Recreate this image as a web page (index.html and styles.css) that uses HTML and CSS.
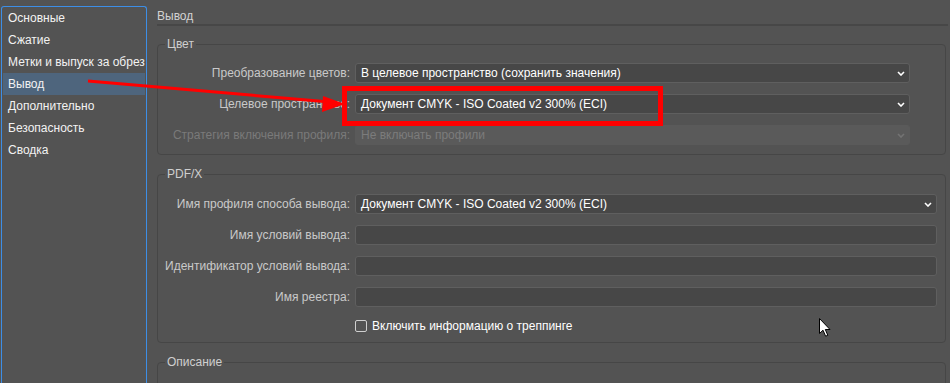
FILE: index.html
```html
<!DOCTYPE html>
<html lang="ru">
  <head>
    <meta charset="UTF-8" />
    <title>Экспорт PDF — Вывод</title>
    <link rel="stylesheet" href="styles.css">
  </head>
  <body>
    <div class="dialog">
      <ul class="nav">
        <li>Основные</li>
        <li>Сжатие</li>
        <li>Метки и выпуск за обрез</li>
        <li class="active">Вывод</li>
        <li>Дополнительно</li>
        <li>Безопасность</li>
        <li>Сводка</li>
      </ul>

      <main class="content">
        <h1 class="page-title">Вывод</h1>

        <fieldset class="group group-color">
          <legend>Цвет</legend>
          <div class="form-grid">
            <label>Преобразование цветов:</label>
            <div class="select">
              <span>В целевое пространство (сохранить значения)</span>
              <svg class="chevron" width="8" height="5" viewBox="0 0 8 5"><polyline points="1,1 4,4 7,1" /></svg>
            </div>

            <label>Целевое пространство:</label>
            <div class="select">
              <span>Документ CMYK - ISO Coated v2 300% (ECI)</span>
              <svg class="chevron" width="8" height="5" viewBox="0 0 8 5"><polyline points="1,1 4,4 7,1" /></svg>
            </div>

            <label class="disabled">Стратегия включения профиля:</label>
            <div class="select disabled">
              <span>Не включать профили</span>
              <svg class="chevron" width="8" height="5" viewBox="0 0 8 5"><polyline points="1,1 4,4 7,1" /></svg>
            </div>
          </div>
        </fieldset>

        <fieldset class="group group-pdfx">
          <legend>PDF/X</legend>
          <div class="form-grid">
            <label>Имя профиля способа вывода:</label>
            <div class="select">
              <span>Документ CMYK - ISO Coated v2 300% (ECI)</span>
              <svg class="chevron" width="8" height="5" viewBox="0 0 8 5"><polyline points="1,1 4,4 7,1" /></svg>
            </div>

            <label>Имя условий вывода:</label>
            <div class="text-input"></div>

            <label>Идентификатор условий вывода:</label>
            <div class="text-input"></div>

            <label>Имя реестра:</label>
            <div class="text-input"></div>

            <span></span>
            <div class="checkbox-row">
              <span class="checkbox"></span>
              Включить информацию о треппинге
            </div>
          </div>
        </fieldset>

        <fieldset class="group group-desc">
          <legend>Описание</legend>
        </fieldset>
      </main>
    </div>

    <!-- annotation drawn over the screenshot -->
    <svg class="annotation" width="950" height="383" viewBox="0 0 950 383">
      <line x1="88" y1="81" x2="330" y2="102" stroke="#ff0000" stroke-width="3" />
      <polygon points="345,104 323,96 322,112" fill="#ff0000" />
      <rect x="344.5" y="88.5" width="316" height="35" fill="none" stroke="#ff0000" stroke-width="5" />
    </svg>

    <svg class="cursor" width="14" height="20" viewBox="0 0 14 20">
      <path d="M0.5 0.5 L0.5 15.5 L4 12.2 L6.6 18.2 L8.8 17.3 L6.3 11.5 L11 11.5 Z" fill="#ffffff" stroke="#000000" stroke-width="1" />
    </svg>
  </body>
</html>
```

FILE: styles.css
```css
body {
  margin: 0;
  width: 950px;
  height: 383px;
  overflow: hidden;
  background-color: #535353;
  color: #c9c9c9;
  font-family: "Liberation Sans", Arial, sans-serif;
  font-size: 12px;
  position: relative;
}
.dialog {
  display: flex;
  height: 100%;
  overflow: hidden;
}
.nav {
  list-style: none;
  margin: 6px 0 0 1px;
  padding: 0;
  width: 146px;
  height: calc(100% - 6px);
  box-sizing: border-box;
  border: 1px solid #3d8ee6;
  border-bottom: none;
  border-radius: 3px 3px 0 0;
  flex-shrink: 0;
}
.nav li {
  height: 22px;
  line-height: 22px;
  padding-left: 5px;
  margin: 0 1px;
  color: #f2f2f2;
  white-space: nowrap;
  overflow: hidden;
}
.nav li.active {
  background-color: #4e657d;
}
.content {
  flex: 1;
  padding-left: 10px;
}
.page-title {
  font-size: 12px;
  font-weight: normal;
  color: #d2d2d2;
  margin: 0 2px 0 0;
  padding: 9px 0 1px;
  line-height: 14px;
  border-bottom: 2px solid #474747;
}
.group {
  border: 1px solid #464646;
  border-radius: 4px;
  margin: 11px 4px 0 0;
  padding: 12px 35px 9px 7px;
  min-width: 0;
}
.group legend {
  padding: 0 2px;
  line-height: 14px;
  color: #cfcfcf;
}
.group-pdfx {
  margin-top: 12px;
  padding: 13px 8px 8px 7px;
}
.group-desc {
  margin-top: 12px;
  height: 30px;
  padding: 0 0 0 7px;
}
.form-grid {
  display: grid;
  grid-template-columns: 185px 1fr;
  column-gap: 5px;
  row-gap: 11px;
  align-items: center;
}
.form-grid label {
  text-align: right;
  white-space: nowrap;
}
.form-grid label.disabled {
  color: #7a7a7a;
}
.select,
.text-input {
  height: 18px;
  border: 1px solid #5f5f5f;
  border-radius: 3px;
  background-color: #474747;
  display: flex;
  align-items: center;
  justify-content: space-between;
  padding: 0 4px 0 5px;
  color: #ffffff;
}
.chevron polyline {
  fill: none;
  stroke: #ffffff;
  stroke-width: 1.6;
}
.select.disabled {
  background-color: #5a5a5a;
  border-color: #5a5a5a;
  color: #7c7c7c;
}
.select.disabled .chevron polyline {
  stroke: #737373;
}
.checkbox-row {
  display: flex;
  align-items: center;
  gap: 5px;
  height: 16px;
  color: #ffffff;
}
.checkbox {
  width: 10px;
  height: 10px;
  border: 1px solid #cfcfcf;
  border-radius: 2px;
}
.annotation {
  position: absolute;
  left: 0;
  top: 0;
  pointer-events: none;
}
.cursor {
  position: absolute;
  left: 819px;
  top: 318px;
}
```
